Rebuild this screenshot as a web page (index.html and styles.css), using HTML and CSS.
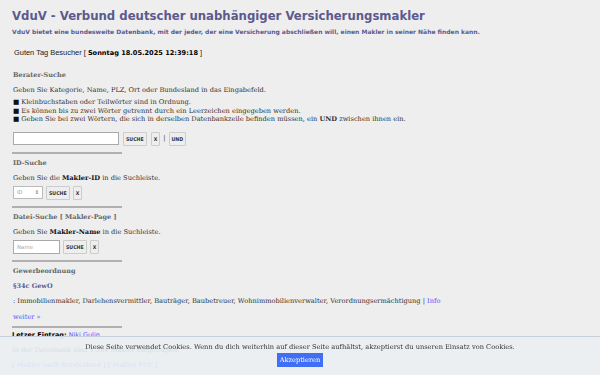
FILE: index.html
```html
<!DOCTYPE html>
<html lang="de">
    <head>
        <link rel="stylesheet" href="styles.css">
        <meta charset="UTF-8">
        <title>VduV - Verbund deutscher unabhängiger Versicherungsmakler</title>
    </head>
    <body>
        <div class="head">
            <h1 class="title">VduV - Verbund deutscher unabhängiger Versicherungsmakler</h1>
            <p class="lead">VduV bietet eine bundesweite Datenbank, mit der jeder, der eine Versicherung abschließen will, einen Makler in seiner Nähe finden kann.</p>
        </div>
        <p class="greeting">Guten Tag Besucher [ <b>Sonntag 18.05.2025 12:39:18</b> ]</p>

        <div class="block first">
            <h2 class="sec">Berater-Suche</h2>
            <p class="txt">Geben Sie Kategorie, Name, PLZ, Ort oder Bundesland in das Eingabefeld.</p>
            <ul class="hints">
                <li>Kleinbuchstaben oder Teilwörter sind in Ordnung.</li>
                <li>Es können bis zu zwei Wörter getrennt durch ein Leerzeichen eingegeben werden.</li>
                <li>Geben Sie bei zwei Wörtern, die sich in derselben Datenbankzeile befinden müssen, ein <b>UND</b> zwischen ihnen ein.</li>
            </ul>
            <div class="row row-main">
                <input type="text" class="q q-wide">
                <button class="btn">SUCHE</button>
                <button class="btn">X</button>
                <span class="pipe">|</span>
                <button class="btn">UND</button>
            </div>
        </div>
        <hr class="sep">

        <div class="block">
            <h2 class="sec">ID-Suche</h2>
            <p class="txt">Geben Sie die <b>Makler-ID</b> in die Suchleiste.</p>
            <div class="row">
                <span class="num"><span class="ph">ID</span><span class="spin">&#8661;</span></span>
                <button class="btn">SUCHE</button>
                <button class="btn">X</button>
            </div>
        </div>
        <hr class="sep">

        <div class="block">
            <h2 class="sec">Datei-Suche [ Makler-Page ]</h2>
            <p class="txt">Geben Sie <b>Makler-Name</b> in die Suchleiste.</p>
            <div class="row">
                <input type="text" class="q q-name" placeholder="Name">
                <button class="btn">SUCHE</button>
                <button class="btn">X</button>
            </div>
        </div>
        <hr class="sep">

        <div class="block">
            <h2 class="sec">Gewerbeordnung</h2>
            <h3 class="para">§34c GewO</h3>
            <p class="txt">: Immobilienmakler, Darlehensvermittler, Bauträger, Baubetreuer, Wohnimmobilienverwalter, Verordnungsermächtigung | <a href="#" class="lnk">Info</a></p>
            <p class="txt more"><a href="#" class="lnk">weiter »</a></p>
        </div>
        <hr class="sep sep-last">

        <p class="last"><b>Letzer Eintrag:</b> <a href="#" class="lnk">Niki Gulin</a></p>
        <p class="txt foot">In der Datenbank sind 1.284 Makler eingetragen.</p>
        <p class="txt foot"><a href="#" class="lnk">[ Makler nach Bundesland ]</a> <a href="#" class="lnk">[ Makler PDF ]</a></p>

        <div class="cookie">
            <p class="cookie-text">Diese Seite verwendet Cookies. Wenn du dich weiterhin auf dieser Seite aufhältst, akzeptierst du unseren Einsatz von Cookies.</p>
            <button class="cookie-btn">Akzeptieren</button>
        </div>
    </body>
</html>
```

FILE: styles.css
```css
body {
    background: #eeeeee;
    margin: 0;
    padding: 0 12px;
    font-family: "DejaVu Serif", serif;
    font-size: 6.65px;
    line-height: 9px;
    color: #333;
}
.head {
    padding-top: 9px;
}
.title {
    margin: 0;
    font-family: "DejaVu Sans", sans-serif;
    font-size: 11.7px;
    line-height: 14px;
    color: #5b5a8e;
}
.lead {
    margin: 5px 0 0 0;
    font-family: "DejaVu Sans", sans-serif;
    font-weight: bold;
    font-size: 6px;
    line-height: 8px;
    color: #5b5a8e;
}
.greeting {
    margin: 12px 0 0 2px;
    font-family: "Liberation Sans", sans-serif;
    font-size: 7.45px;
    color: #222;
}
.greeting b {
    font-family: "DejaVu Sans", sans-serif;
    font-size: 6.6px;
    color: #000;
}
.block {
    padding-left: 1px;
}
.sec {
    margin: 5px 0 0 0;
    font-size: 6.5px;
    color: #666;
}
.first .sec {
    margin-top: 13px;
}
.txt {
    margin: 6px 0 0 0;
}
.txt b {
    color: #111;
}
.hints {
    list-style: none;
    margin: 3px 0 0 0;
    padding: 0;
}
.hints li {
    line-height: 8.5px;
}
.hints li::before {
    content: "\25A0";
    color: #111;
    margin-right: 2px;
}
.row {
    display: flex;
    align-items: center;
    gap: 3px;
    height: 14px;
    margin-top: 3px;
}
.row-main {
    margin-top: 8px;
    gap: 4px;
}
.q {
    box-sizing: border-box;
    height: 13px;
    border: 1px solid #aaa;
    background: #fff;
    padding: 0 3px;
    font-family: "DejaVu Sans", sans-serif;
    font-size: 5.5px;
}
.q::placeholder {
    color: #aaa;
}
.q-wide {
    width: 106px;
}
.q-name {
    width: 47px;
    height: 14px;
}
.num {
    box-sizing: border-box;
    display: flex;
    justify-content: space-between;
    align-items: center;
    width: 30px;
    height: 13px;
    border: 1px solid #bbb;
    background: #fff;
    padding: 0 3px;
    font-family: "DejaVu Sans", sans-serif;
    font-size: 5px;
    color: #999;
}
.spin {
    color: #555;
}
.btn {
    box-sizing: border-box;
    height: 14px;
    padding: 0 2px;
    border: 1px solid #ccc;
    border-radius: 1px;
    background: #eee;
    font-family: "DejaVu Sans Condensed", "DejaVu Sans", sans-serif;
    font-weight: bold;
    font-size: 5.2px;
    color: #333;
}
.pipe {
    margin: 0 -1px;
    color: #333;
}
.sep {
    width: 110px;
    margin: 6px 0 0 0;
    border: 0;
    border-top: 2px solid #b0b0b0;
}
.para {
    margin: 6px 0 0 0;
    font-size: 6.5px;
    color: #5b5a8e;
}
.lnk {
    color: #5555ff;
    text-decoration: none;
}
.more {
    margin-top: 7px;
}
.sep-last {
    margin-top: 4px;
}
.last {
    margin: 3px 0 0 0;
    font-family: "DejaVu Sans", sans-serif;
    font-size: 6.5px;
    color: #000;
}
.foot {
    margin-top: 6px;
}
.cookie {
    position: fixed;
    left: 0;
    right: 0;
    bottom: 0;
    height: 39px;
    box-sizing: border-box;
    padding-top: 6px;
    background: rgba(234, 238, 242, 0.9);
    border-top: 1px solid #c5d0da;
    text-align: center;
}
.cookie-text {
    margin: 0;
    font-size: 6.65px;
    line-height: 9px;
    color: #333;
}
.cookie-btn {
    margin-top: 1px;
    height: 14px;
    padding: 0 3px;
    border: 0;
    background: #3f6ff5;
    color: #fff;
    font-family: "DejaVu Serif", serif;
    font-size: 6.65px;
}
```
